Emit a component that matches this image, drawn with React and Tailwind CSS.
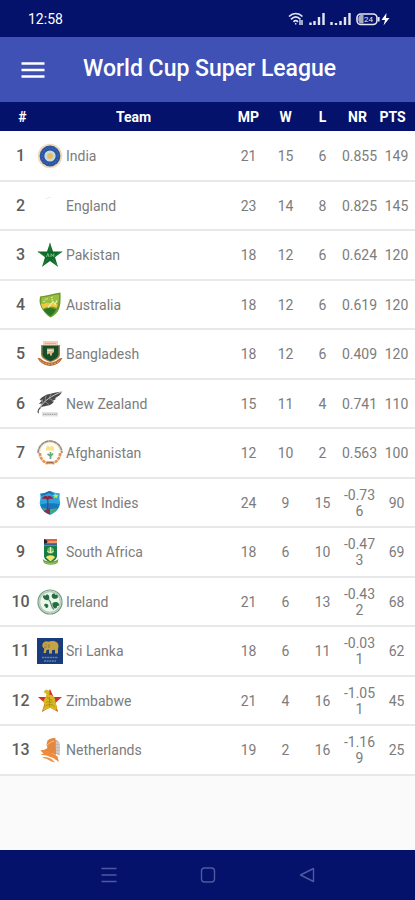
import React from 'react';

const IndiaLogo = () => (
  <svg viewBox="0 0 26 26" className="size-[26px]" aria-hidden="true">
    <circle cx="13" cy="13" r="12" fill="#f3d9b4" />
    <circle cx="13" cy="13" r="11.8" fill="none" stroke="#e9d2ae" strokeWidth="1" strokeDasharray="1 1" />
    <circle cx="13" cy="13" r="10.4" fill="#2b559f" />
    <circle cx="13" cy="13" r="8" fill="none" stroke="#4670b2" strokeWidth="1.2" strokeDasharray="1.4 1.6" />
    <circle cx="13" cy="13" r="5.6" fill="#d5e2e6" />
    <circle cx="13" cy="13" r="4.2" fill="none" stroke="#a9c3d2" strokeWidth="1" strokeDasharray="1 1" />
    <circle cx="13" cy="13" r="3" fill="#e3bd62" />
  </svg>
);

const EnglandLogo = () => (
  <svg viewBox="0 0 26 26" className="size-[26px]" aria-hidden="true">
    <path d="M9 5.5h2M11 4.5h3" stroke="#f2ece0" strokeWidth="1" />
  </svg>
);

const PakistanLogo = () => (
  <svg viewBox="0 0 26 26" className="size-[26px]" aria-hidden="true">
    <path d="M13 .8l3 8.7h9.6l-7.6 5.7 2.9 9.6-7.9-5.7-7.9 5.7L8 15.2.4 9.5H10z" fill="#0d6a28" />
    <path d="M13 1v8M25 9.7l-7 4.3M20.5 24.3L15.5 17M5.5 24.3L10.5 17M1 9.7l7 4.3" stroke="#2f8c45" strokeWidth=".7" />
    <path d="M9.5 15l1.3-3.5 1.3 3.5M14 15v-3.2l1.5 2 1.3-2V15" fill="none" stroke="#7dbb8a" strokeWidth="1" />
  </svg>
);

const AustraliaLogo = () => (
  <svg viewBox="0 0 26 26" className="size-[26px]" aria-hidden="true">
    <path d="M3 4.5C9 3.5 16 2 23.5.5c.2 8 .3 14-2.5 18.5-2 3-5 5.5-7.5 6.5C7 21.5 3 15 2.5 9z" fill="#6b9a2a" />
    <path d="M4.5 5.5C11 4.5 16 3.500 22 2.300c.2 4-.2 7-.9 9.700C15 10 9 10 4 13z" fill="#98bf42" />
    <path d="M4 12.500c5-2.500 11-2 17 0l-1.500 3.500C14 13.500 9 15 6 17z" fill="#f0c643" />
    <path d="M6.500 17.500c4-2 8-2 12.500 0-1.500 3-3.500 5-5.500 6.500-3-2-5.500-4-7-6.500z" fill="#2a7526" />
    <path d="M11 15.500l5-6 2 3 2-4" fill="none" stroke="#e7f0a5" strokeWidth="1.300" />
    <path d="M8 7.500l3-1M14 5.500l2-.5M6 9.500l2-.5M14 8l2-.5" stroke="#d7e6a0" strokeWidth="1" />
  </svg>
);

const BangladeshLogo = () => (
  <svg viewBox="0 0 26 26" className="size-[26px]" aria-hidden="true">
    <path d="M6 0h15v4.500H6z" fill="#f8cdb6" />
    <path d="M8 2.500h11" stroke="#eba88f" strokeWidth="1" />
    <path d="M4 4h19v9c0 4-4 6.500-9.500 8-5.500-1.500-9.500-4-9.500-8z" fill="#a58142" />
    <path d="M5.500 5h16v8c0 3.500-4 5.500-8 7-4-1.500-8-3.500-8-7z" fill="#164d2c" />
    <path d="M10 7.500h7v3.500l-2 1.500v2h-2v-2l-3 1z" fill="#dfba83" />
    <path d="M10.500 9.500h5" stroke="#efe9d0" strokeWidth="1" />
    <path d="M.5 17c3-.5 4 1.500 6.500 3 4 2 8 2 12 0 2.500-1.500 3.500-3.500 6.500-3l-2.500 3.800c-5.500 5.500-14.500 5.500-20 0z" fill="#b86a35" />
    <path d="M3 19.500c5 5 15 5 20 0" fill="none" stroke="#dfb06c" strokeWidth="1" strokeDasharray="2 1" />
  </svg>
);

const NewZealandLogo = () => (
  <svg viewBox="0 0 26 26" className="size-[26px]" aria-hidden="true">
    <path d="M25 .5C17 2 7 2.500 2.500 9L5 9.500 1.800 13l3.200-.5L2.500 17l3.500-1.500c5-1 8.500-1 11-5l-2-.2 4.500-2.500-2-.4C21 5.500 24 4 25 .5z" fill="#484848" />
    <path d="M25 .5C15 5 7 9 3 17c-1.500 1-2 3-1.500 5.500" fill="none" stroke="#dcdcdc" strokeWidth=".9" />
    <path d="M9 4.500l-1 5M14 3l-2 4.500M5 8l1 4M8 10.500l4 3M12 7.500l4 2" stroke="#a9a9a9" strokeWidth=".7" />
    <path d="M3.500 16.500C1 18.500.8 20.500 1.500 22" fill="none" stroke="#555" strokeWidth="1.200" />
    <path d="M5 21h16v4.500H5z" fill="#e2e2e2" />
    <path d="M6 23.300h14" stroke="#a5a5a5" strokeWidth="1.300" strokeDasharray="1.500 .7" />
  </svg>
);

const AfghanistanLogo = () => (
  <svg viewBox="0 0 26 26" className="size-[26px]" aria-hidden="true">
    <circle cx="13" cy="12.500" r="11" fill="#fffdf8" stroke="#f1d7b5" strokeWidth="2" />
    <path d="M1 13A12 12 0 0 1 25 13" fill="none" stroke="#8c8c8c" strokeWidth="1.500" strokeDasharray="4 .4" />
    <path d="M3 13c0 5 3.500 9 7.500 10.500M23 13c0 5-3.500 9-7.500 10.500" fill="none" stroke="#e59457" strokeWidth="2.500" strokeDasharray="3 1" />
    <path d="M9 8l1.500-2.500L13 7l2.500-1.500L17 8v2.500H9z" fill="#f9e38a" />
    <path d="M13.500 12v7M10.500 14l3 2M16 13.500l-2.500 3" stroke="#65ad87" strokeWidth="1.700" />
    <path d="M9.500 22.500h7" stroke="#b2684c" strokeWidth="2" />
  </svg>
);

const WestIndiesLogo = () => (
  <svg viewBox="0 0 26 26" className="size-[26px]" aria-hidden="true">
    <path d="M3 3.500l5-.8 5-2 5 2 5 .8c-1 3-.5 6 .2 9-.3 6-4.500 10-10.200 12.500C7 22.500 3 18.500 2.700 12.500 3.500 9.500 3.800 6.500 3 3.500z" fill="#2ba4dc" />
    <path d="M4 5l4-1 4-2 4 2" fill="none" stroke="#196fae" strokeWidth="1.600" />
    <path d="M3.500 14.500c6-1.500 13-1.500 19-.5-.8 3-2 5.500-4.500 7.500-5 1-9 .5-12-2-1.300-1.500-2-3-2.500-5z" fill="#1878bf" />
    <path d="M5 17.500c2 3 5 5 8 6.500 3.500-1.500 6-3.500 7.500-6-5 1.500-10 1.500-15.500-.5z" fill="#45aa78" />
    <path d="M10.500 8c.6 5 .4 9-.5 13" fill="none" stroke="#6b3a6c" strokeWidth="1.200" />
    <path d="M6.500 21l6.500-3v6.500c-2.500-1-4.800-2-6.500-3.500z" fill="#8b2f4d" />
    <path d="M5.500 8.500c1-2 3-2.800 5-1.500 2-1.300 4-.8 5 1.500-1.500-.3-3-.3-4 .5h-2c-1-.8-2.500-.8-4-.5z" fill="#8a2746" stroke="#8a2746" />
    <path d="M18.800 3l.8 1.900 2 .2-1.500 1.300.5 2-1.800-1.100L17 8.400l.5-2L16 5.100l2-.2z" fill="#cce650" />
  </svg>
);

const SouthAfricaLogo = () => (
  <svg viewBox="0 0 26 26" className="size-[26px]" aria-hidden="true">
    <path d="M7 0h13v5H7z" fill="#e4603c" />
    <path d="M7 0l5 2.800L7 5.500z" fill="#222" />
    <path d="M7 4.500h13v2H7z" fill="#315f96" />
    <path d="M10 3h10" stroke="#e8d7a5" strokeWidth="1" />
    <path d="M7 6.500h13V17c0 3-3 5-6.500 6.500C10 22 7 20 7 17z" fill="#187b43" />
    <circle cx="13.500" cy="11.500" r="3.300" fill="#65b56c" />
    <path d="M10.500 12c1 2 5 2 6 0M13.500 8v6" fill="none" stroke="#f1eeb1" strokeWidth="1.200" />
    <path d="M9 18.500c1-3 8-3 9 0l-4.500 4z" fill="#f0e46b" />
    <path d="M5.500 19.500c1.500 4 14.500 4 16 0l-.8 4c-3 3-11 3-14 0z" fill="#6c9d3d" />
    <path d="M7.500 23c3 2 9 2 12 0" fill="none" stroke="#b9c065" strokeWidth="1" />
  </svg>
);

const IrelandLogo = () => (
  <svg viewBox="0 0 26 26" className="size-[26px]" aria-hidden="true">
    <circle cx="13" cy="13" r="12" fill="#edf5ef" stroke="#729b7d" strokeWidth="1.200" />
    <circle cx="13" cy="13" r="10.500" fill="none" stroke="#b3ceb9" strokeWidth="1.500" />
    <path d="M12 11C9 11.500 6.500 10.500 6 8c-.3-1.700 1.500-2.200 2.500-1.200C9 5 11.500 5 12 7c.5 1.400.3 2.800 0 4zM16 9.500c-2-2-1.500-4.500.5-5 1-.3 1.800.5 1.800 1.500 1.700-.8 3.200.8 2.500 2.300-.8 1.700-3 1.800-4.800 1.200zM15.500 14c3-1.800 6.500-1 6.500 1.500 0 1.200-1 2-2 1.500.5 2-1.500 3-3 2-1.500-1-1.800-3-1.500-5zM11 15.500c-1.500-1.200-3.500-1-3.800.5-.2 1 .5 1.500 1.300 1.400-.2 1.500 1.200 2.200 2.200 1.200.8-.9.700-2 .3-3.100z" fill="#256d3d" />
    <path d="M11 10c1.500 1 2.500 3 3 5s1 4 3 5.500" fill="none" stroke="#4c8a5e" strokeWidth="1.100" />
  </svg>
);

const SriLankaLogo = () => (
  <svg viewBox="0 0 26 26" className="size-[26px]" aria-hidden="true">
    <path d="M0 0h26v26H0z" fill="#193c7c" />
    <path d="M5.500 6c1.500-3 4-3.500 6-2.200 3.500-1.300 7-.8 9 1.200 1.500 2 1 4 .5 6v4.500h-3v-3.700l-3 .5v3.200h-3v-4l-2.500.5-.5 3H6.500l.8-4.500C5.500 10 5 8 5.500 6z" fill="#c6a344" />
    <path d="M8 5.500l2 2M7 9h3M12 6v4" stroke="#8b7848" strokeWidth="1" />
    <path d="M5 19.500h16M7 23h12" stroke="#6681af" strokeWidth="1.600" strokeDasharray="2 .6" />
  </svg>
);

const ZimbabweLogo = () => (
  <svg viewBox="0 0 26 26" className="size-[26px]" aria-hidden="true">
    <path d="M13 1l3.500 8H25l-6.700 6 2.700 9-8-5-8 5 2.700-9L1 9h8.500z" fill="#d92c2c" />
    <path d="M6.500 4l2.500-2.500 3 1 .8 2-.8 2c4 .5 7 3.500 6.500 8.500l1.700 3.500-1 4.500-6-3-8 3 2.500-6-1.500-4 2.500-4 .8-3z" fill="#d8b722" />
    <path d="M10 9.500l5 3M9.500 14h6M8.500 18c3-2 6-2 9 .5M12.500 9v10" fill="none" stroke="#a98d1b" strokeWidth=".9" />
  </svg>
);

const NetherlandsLogo = () => (
  <svg viewBox="0 0 26 26" className="size-[26px]" aria-hidden="true">
    <path d="M16.500 2c5 1 6.500 3.500 6.500 7l-.5 9.500-4.500-2V4z" fill="#c3b7ae" />
    <path d="M19 6h4M19 9h4M19 12h3.500M19 15h3" stroke="#e6e0dc" strokeWidth=".9" />
    <path d="M10.500 3.500C13 1.500 16 .5 18.500 1.500L19 18l-4-2-5 .5-4-3 4.500-2.500-1-3.500z" fill="#e4873f" />
    <path d="M3.500 13.500c5-1.500 10 1.500 17 6l1.500 5.500c-3-2-4.500-3.500-7-4.500-4-1.500-6.500-3-11.500-2.500l3-1.500z" fill="#f08a3b" />
    <path d="M5 20c5-.5 10 1 13 5.500-3-.5-4.500-1.500-6.500-2.500-2-1.500-4.500-1.500-6.500-3z" fill="#ea9850" />
    <path d="M10 8c3-2 4-3.500 7-4" fill="none" stroke="#f6c28e" strokeWidth="1" />
  </svg>
);

const TEAMS = [
  { name: 'India', Logo: IndiaLogo, mp: 21, w: 15, l: 6, nr: '0.855', pts: 149 },
  { name: 'England', Logo: EnglandLogo, mp: 23, w: 14, l: 8, nr: '0.825', pts: 145 },
  { name: 'Pakistan', Logo: PakistanLogo, mp: 18, w: 12, l: 6, nr: '0.624', pts: 120 },
  { name: 'Australia', Logo: AustraliaLogo, mp: 18, w: 12, l: 6, nr: '0.619', pts: 120 },
  { name: 'Bangladesh', Logo: BangladeshLogo, mp: 18, w: 12, l: 6, nr: '0.409', pts: 120 },
  { name: 'New Zealand', Logo: NewZealandLogo, mp: 15, w: 11, l: 4, nr: '0.741', pts: 110 },
  { name: 'Afghanistan', Logo: AfghanistanLogo, mp: 12, w: 10, l: 2, nr: '0.563', pts: 100 },
  { name: 'West Indies', Logo: WestIndiesLogo, mp: 24, w: 9, l: 15, nr: '-0.736', pts: 90 },
  { name: 'South Africa', Logo: SouthAfricaLogo, mp: 18, w: 6, l: 10, nr: '-0.473', pts: 69 },
  { name: 'Ireland', Logo: IrelandLogo, mp: 21, w: 6, l: 13, nr: '-0.432', pts: 68 },
  { name: 'Sri Lanka', Logo: SriLankaLogo, mp: 18, w: 6, l: 11, nr: '-0.031', pts: 62 },
  { name: 'Zimbabwe', Logo: ZimbabweLogo, mp: 21, w: 4, l: 16, nr: '-1.051', pts: 45 },
  { name: 'Netherlands', Logo: NetherlandsLogo, mp: 19, w: 2, l: 16, nr: '-1.169', pts: 25 },
];

function StatusBar() {
  return (
    <div className="flex h-[37px] items-center justify-between bg-[#04126b] pl-7 pr-6 text-white">
      <span className="text-sm">12:58</span>
      <svg viewBox="0 0 104 14" className="h-[14px] w-[104px]" fill="none" stroke="#e4e6f4" aria-hidden="true">
        <path d="M2 4.500c4-4 9.500-4 13.500 0M4 7.300c3-3 6.500-3 9.500 0M6.500 9.800c1.500-1.500 3-1.500 4.500 0" strokeWidth="1.700" />
        <path d="M8.700 12.500v-1.500M13 13V8M15 8v5" strokeWidth="1.400" />
        <path d="M23.500 13v-2.500M27.500 13V9M32 13V5M36.500 13V1M44.500 13v-3M49 13v-2M53.500 13V9M58 13V5M62.500 13V1" strokeWidth="2.400" />
        <rect x="70" y="2" width="20" height="10.500" rx="4" strokeWidth="1.600" />
        <path d="M73.500 3h3v8.500h-3c-3-1-3-7.500 0-8.500z" fill="#a9aabb" stroke="none" />
        <path d="M91.800 5v4.500" strokeWidth="1.600" />
        <text x="77" y="10" fill="#e4e6f4" stroke="none" fontSize="8" fontFamily="Roboto, sans-serif">24</text>
        <path d="M99.500 1l-5 7H98l-1.500 5.500L102.500 6H99z" fill="#fff" stroke="none" />
      </svg>
    </div>
  );
}

function NavBar() {
  return (
    <nav className="flex h-[50px] items-center justify-around bg-[#04126b] px-[59px] text-[#4d59a0]">
      <button type="button" aria-label="Recent apps">
        <svg viewBox="0 0 16 16" className="size-4" fill="none" stroke="currentColor" strokeWidth="1.500">
          <path d="M.5 1.500h15M.5 8h15M.5 14.500h15" />
        </svg>
      </button>
      <button type="button" aria-label="Home">
        <svg viewBox="0 0 16 16" className="size-4" fill="none" stroke="currentColor" strokeWidth="1.400">
          <rect x="1.500" y="1" width="13" height="14" rx="3" />
        </svg>
      </button>
      <button type="button" aria-label="Back">
        <svg viewBox="0 0 16 16" className="size-4" fill="none" stroke="currentColor" strokeWidth="1.400" strokeLinejoin="round">
          <path d="M14.500 1.500v13L1.500 8z" />
        </svg>
      </button>
    </nav>
  );
}

export default function App() {
  return (
    <div className="flex min-h-screen flex-col bg-[#fafafa] font-[Roboto,sans-serif]">
      <StatusBar />
      <header className="flex h-[65px] items-center gap-[38px] bg-[#3f51b5] px-[21px] text-white">
        <button type="button" aria-label="Menu">
          <svg viewBox="0 0 24 18" className="h-[18px] w-6" stroke="currentColor" strokeWidth="2.400">
            <path d="M.5 2.500h23M.5 9h23M.5 15.500h23" />
          </svg>
        </button>
        <h1 className="text-[23px] font-medium">World Cup Super League</h1>
      </header>
      <main className="flex-1">
        <table className="w-full table-fixed text-center text-sm text-[#7c7c7c]">
          <colgroup>
            <col className="w-[37px]" />
            <col />
            <col className="w-[37px]" />
            <col className="w-[37px]" />
            <col className="w-[37px]" />
            <col className="w-[37px]" />
            <col className="w-[37px]" />
          </colgroup>
          <thead className="bg-[#04126b] text-white">
            <tr className="h-[29px]">
              <th className="pl-2">#</th>
              <th>Team</th>
              <th>MP</th>
              <th>W</th>
              <th>L</th>
              <th className="pr-1">NR</th>
              <th className="pr-2">PTS</th>
            </tr>
          </thead>
          <tbody>
            {TEAMS.map(({ name, Logo, mp, w, l, nr, pts }, i) => (
              <tr key={name} className="h-[50px] border-b-2 border-[#e8e8e8] bg-white even:h-[49px]">
                <td className="pl-1 text-base font-medium text-[#5c5c5c]">{i + 1}</td>
                <td>
                  <div className="flex items-center gap-[3px] text-left">
                    <Logo />
                    <span>{name}</span>
                  </div>
                </td>
                <td>{mp}</td>
                <td>{w}</td>
                <td>{l}</td>
                <td className="break-all leading-4">{nr}</td>
                <td>{pts}</td>
              </tr>
            ))}
          </tbody>
        </table>
      </main>
      <NavBar />
    </div>
  );
}
